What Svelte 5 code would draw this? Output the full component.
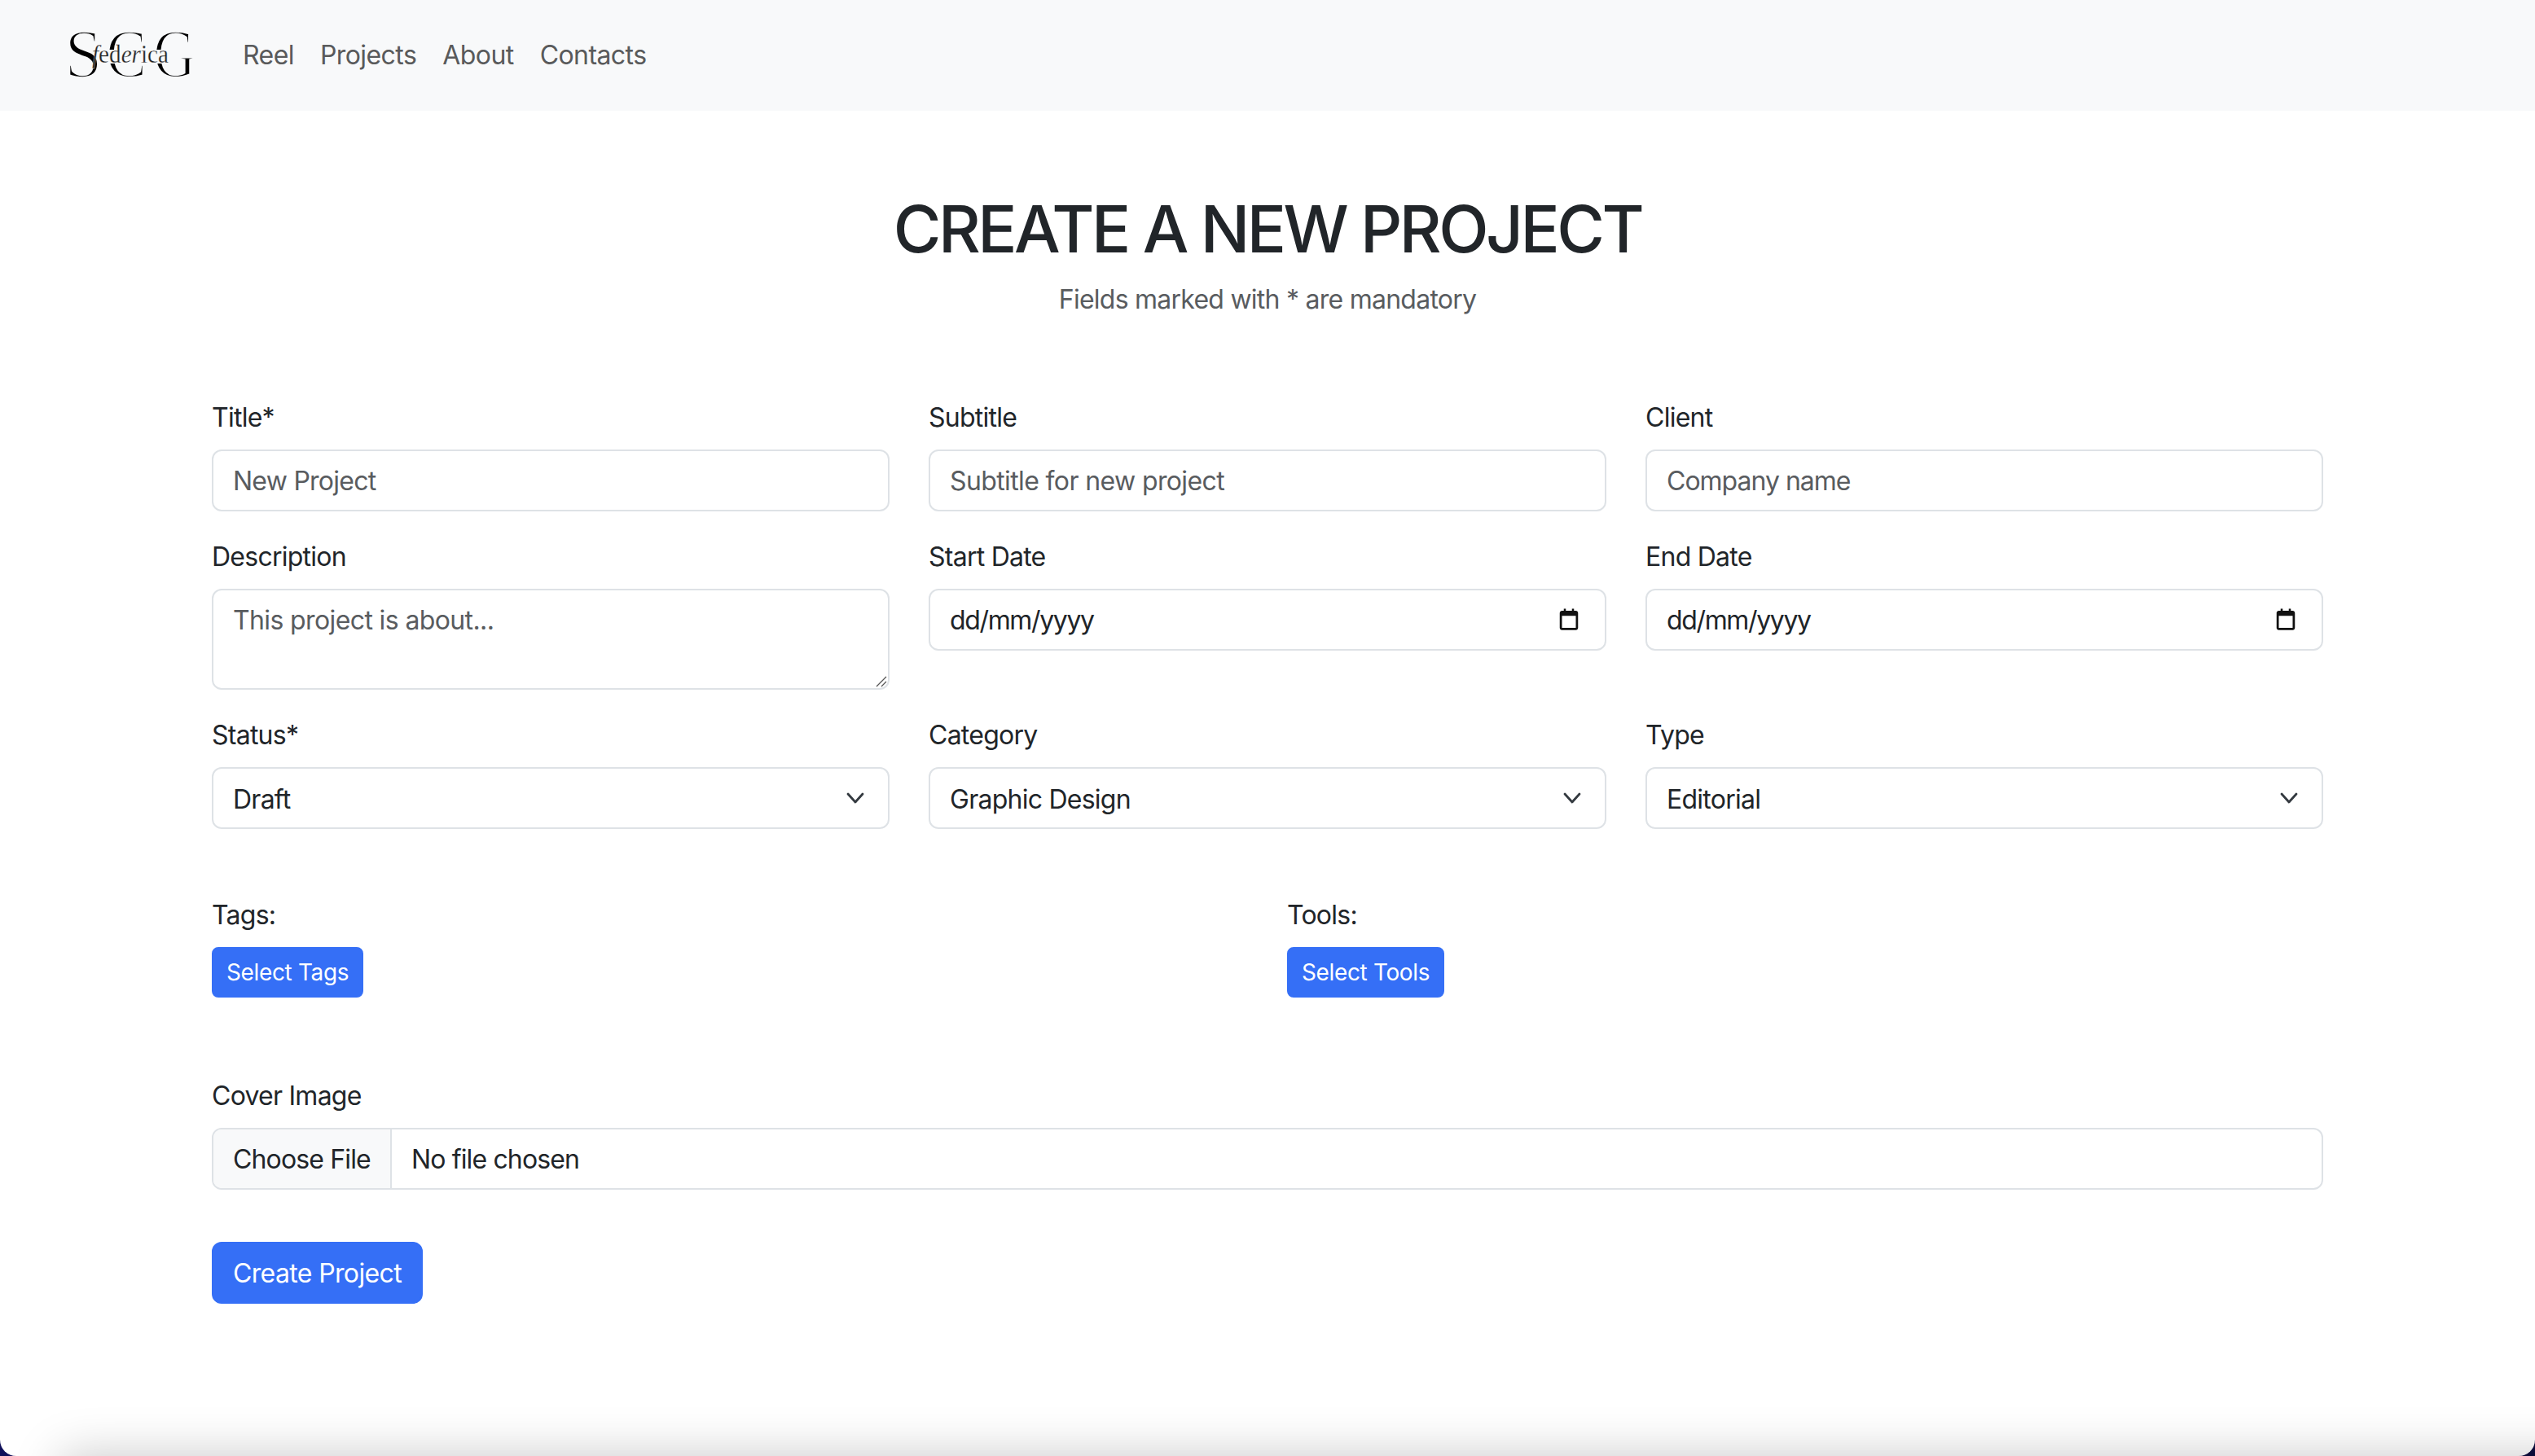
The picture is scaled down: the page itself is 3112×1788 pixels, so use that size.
<script>
  const nav = ['Reel', 'Projects', 'About', 'Contacts'];
</script>

<div class="page">
  <nav class="navbar">
    <svg class="logo" viewBox="0 0 160 64" width="160" height="64" role="img" aria-label="SCG federica">
      <g class="big">
        <text x="0" y="59" transform="translate(-0.500 0) scale(0.97 1)">S</text>
        <text x="0" y="59" transform="translate(50 0) scale(0.88 1)">C</text>
        <text x="0" y="59" transform="translate(108 0) scale(0.85 1)">G</text>
      </g>
      <rect x="42" y="25" width="85" height="17" fill="#f8f9fa" />
      <text class="small" x="33" y="41" textLength="94" lengthAdjust="spacingAndGlyphs"><tspan class="it">f</tspan>ed<tspan class="it">er</tspan>ica</text>
    </svg>
    <ul class="links">
      {#each nav as item}
        <li><a href="#top">{item}</a></li>
      {/each}
    </ul>
  </nav>

  <main class="container">
    <header class="head">
      <h1>CREATE A NEW PROJECT</h1>
      <p>Fields marked with * are mandatory</p>
    </header>

    <form class="form" onsubmit={(e) => e.preventDefault()}>
      <div class="grid">
        <div class="field">
          <label for="title">Title*</label>
          <input id="title" type="text" placeholder="New Project" />
        </div>
        <div class="field">
          <label for="subtitle">Subtitle</label>
          <input id="subtitle" type="text" placeholder="Subtitle for new project" class="wide" />
        </div>
        <div class="field">
          <label for="client">Client</label>
          <input id="client" type="text" placeholder="Company name" class="tight" />
        </div>

        <div class="field">
          <label for="desc">Description</label>
          <div class="control">
            <textarea id="desc" placeholder="This project is about..." class="wide"></textarea>
            <svg class="grip" viewBox="0 0 16 16" width="16" height="16" aria-hidden="true">
              <path d="M15 3 3 15M15 9l-6 6" fill="none" stroke="#555" stroke-width="1.300" />
            </svg>
          </div>
        </div>
        <div class="field">
          <label for="start">Start Date</label>
          <div class="control">
            <input id="start" type="text" value="dd/mm/yyyy" class="date" />
            <svg class="cal" viewBox="0 0 24 24" width="30" height="30" aria-hidden="true">
              <path d="M7 2v2H5.2C4 4 3 5 3 6.2v14.6C3 22 4 23 5.2 23h13.6c1.2 0 2.2-1 2.2-2.2V6.2C21 5 20 4 18.800 4H17V2h-2v2H9V2H7zM5.200 9h13.600v11.800H5.200V9z" fill="#111" fill-rule="evenodd" />
            </svg>
          </div>
        </div>
        <div class="field">
          <label for="end">End Date</label>
          <div class="control">
            <input id="end" type="text" value="dd/mm/yyyy" class="date" />
            <svg class="cal" viewBox="0 0 24 24" width="30" height="30" aria-hidden="true">
              <path d="M7 2v2H5.2C4 4 3 5 3 6.2v14.6C3 22 4 23 5.2 23h13.6c1.2 0 2.2-1 2.2-2.2V6.2C21 5 20 4 18.800 4H17V2h-2v2H9V2H7zM5.200 9h13.600v11.800H5.200V9z" fill="#111" fill-rule="evenodd" />
            </svg>
          </div>
        </div>

        <div class="field">
          <label for="status">Status*</label>
          <div class="control">
            <select id="status"><option>Draft</option></select>
            <svg class="chev" viewBox="0 0 24 24" width="24" height="24" aria-hidden="true">
              <path d="m3 7 9 10 9-10" fill="none" stroke="#343a40" stroke-width="2.800" stroke-linecap="round" stroke-linejoin="round" />
            </svg>
          </div>
        </div>
        <div class="field">
          <label for="category">Category</label>
          <div class="control">
            <select id="category"><option>Graphic Design</option></select>
            <svg class="chev" viewBox="0 0 24 24" width="24" height="24" aria-hidden="true">
              <path d="m3 7 9 10 9-10" fill="none" stroke="#343a40" stroke-width="2.800" stroke-linecap="round" stroke-linejoin="round" />
            </svg>
          </div>
        </div>
        <div class="field">
          <label for="type">Type</label>
          <div class="control">
            <select id="type"><option>Editorial</option></select>
            <svg class="chev" viewBox="0 0 24 24" width="24" height="24" aria-hidden="true">
              <path d="m3 7 9 10 9-10" fill="none" stroke="#343a40" stroke-width="2.800" stroke-linecap="round" stroke-linejoin="round" />
            </svg>
          </div>
        </div>
      </div>

      <div class="pickers">
        <div class="picker">
          <span class="lbl">Tags:</span>
          <button type="button" class="btn btn-sm">Select Tags</button>
        </div>
        <div class="picker">
          <span class="lbl">Tools:</span>
          <button type="button" class="btn btn-sm">Select Tools</button>
        </div>
      </div>

      <div class="field cover">
        <label for="cover">Cover Image</label>
        <div class="file" id="cover">
          <span class="file-btn">Choose File</span>
          <span class="file-name">No file chosen</span>
        </div>
      </div>

      <button type="submit" class="btn btn-lg">Create Project</button>
    </form>
  </main>

  <div class="sheet"></div>
</div>

<style>
  :global(html), :global(body) {
    margin: 0;
    height: 100%;
    overflow: hidden;
    background: linear-gradient(90deg, #10105a, #0b0b38);
  }
  * { box-sizing: border-box; }

  .page {
    position: relative;
    width: 3112px;
    height: 1788px;
    overflow: hidden;
    background: #fff;
    color: #212529;
    font-family: Inter, "Liberation Sans", sans-serif;
    font-size: 32px;
    line-height: 48px;
    letter-spacing: -0.75px;
    border-radius: 0 0 20px 20px;
  }

  .navbar {
    height: 136px;
    background: #f8f9fa;
    display: flex;
    align-items: center;
    padding: 0 0 0 80px;
  }
  .logo { flex: none; margin-right: 58px; }
  .big text {
    font-family: "Liberation Serif", serif;
    font-size: 85px;
    fill: #000;
    stroke: #f8f9fa;
    stroke-width: 2.400px;
    letter-spacing: 0;
  }
  .small {
    font-family: "Liberation Serif", serif;
    font-size: 31px;
    fill: #222;
    stroke: #f8f9fa;
    stroke-width: 0.300px;
    letter-spacing: 0;
  }
  .it { font-style: italic; }
  .links {
    list-style: none;
    display: flex;
    gap: 32px;
    margin: 0;
    padding: 0;
    letter-spacing: -0.57px;
  }
  .links a { color: #595a5b; text-decoration: none; }

  .container {
    width: 2592px;
    margin: 0 auto;
  }
  .head {
    padding-top: 97px;
    text-align: center;
  }
  h1 {
    margin: 0 0 15px;
    font-size: 80px;
    line-height: 96px;
    font-weight: 500;
    letter-spacing: -3.5px;
  }
  .head p { margin: 0; color: #595c5f; }

  .form { padding-top: 96px; }
  .grid {
    display: grid;
    grid-template-columns: repeat(3, 832px);
    column-gap: 48px;
    row-gap: 31px;
    align-items: start;
  }
  .field { display: flex; flex-direction: column; }
  label, .lbl { display: block; padding-top: 1px; margin-bottom: 15px; }

  input, select, textarea, .file {
    width: 100%;
    height: 76px;
    padding: 12px 24px;
    border: 2px solid #dee2e6;
    border-radius: 12px;
    background: #fff;
    color: #212529;
    font: inherit;
    letter-spacing: inherit;
    outline: none;
    display: block;
    margin: 0;
  }
  input::placeholder, textarea::placeholder { color: #595c5f; opacity: 1; }
  textarea { height: 124px; resize: none; padding-top: 13px; }
  select { appearance: none; padding-top: 14px; padding-bottom: 10px; }
  .wide { letter-spacing: -0.62px; }
  .tight { letter-spacing: -1px; }
  .date { letter-spacing: -1.35px; }

  .control { position: relative; }
  .cal, .chev, .grip { position: absolute; pointer-events: none; }
  .cal { right: 31px; top: 22px; }
  .chev { right: 30px; top: 26px; }
  .grip { right: 3px; bottom: 3px; }

  .pickers {
    display: grid;
    grid-template-columns: 1fr 1fr;
    column-gap: 48px;
    margin-top: 81px;
  }
  .picker { display: flex; flex-direction: column; align-items: flex-start; }

  .btn {
    display: inline-block;
    border: 2px solid #356ff6;
    background: #356ff6;
    color: #fff;
    font-family: inherit;
    cursor: pointer;
    margin: 0;
  }
  .btn-sm {
    height: 62px;
    padding: 0 16px;
    font-size: 28px;
    line-height: 42px;
    letter-spacing: -0.36px;
    border-radius: 8px;
  }
  .btn-lg {
    height: 76px;
    padding: 2px 24px 0;
    font-size: 32px;
    line-height: 48px;
    letter-spacing: -0.64px;
    border-radius: 12px;
    margin-top: 64px;
  }

  .cover { margin-top: 96px; }
  .file {
    display: flex;
    align-items: center;
    padding: 0;
    overflow: hidden;
    letter-spacing: -0.85px;
  }
  .file-btn {
    flex: none;
    height: 100%;
    display: flex;
    align-items: center;
    padding: 1px 24px 0;
    background: #f8f9fa;
    border-right: 2px solid #dee2e6;
  }
  .file-name { padding: 1px 0 0 24px; }

  .sheet {
    position: absolute;
    left: 75px;
    right: -200px;
    top: 1788px;
    height: 100px;
    box-shadow: 0 0 60px 0 rgba(0, 0, 0, 0.22);
  }
</style>
